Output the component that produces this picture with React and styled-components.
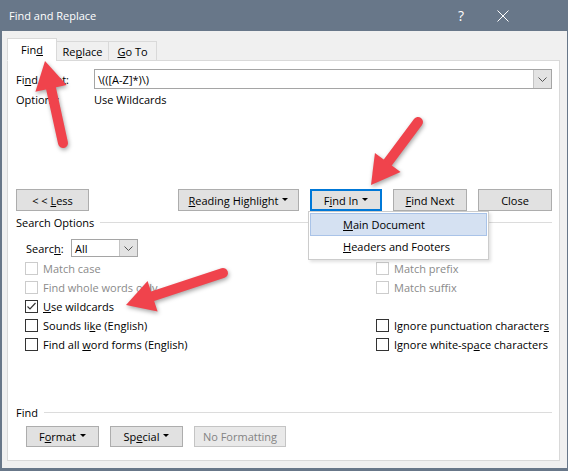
import React from 'react';
import styled, { createGlobalStyle } from 'styled-components';

const Global = createGlobalStyle`
  html, body { margin: 0; padding: 0; background: #fff; }
  body {
    font-family: "Open Sans", "Noto Sans", sans-serif;
    font-size: 11px;
    color: #000;
  }
`;

const Stage = styled.div`
  position: relative;
  width: 568px;
  height: 471px;
`;

const Window = styled.div`
  width: 100%;
  height: 100%;
  box-sizing: border-box;
  display: flex;
  flex-direction: column;
  background: #f0f0f0;
  border: solid #687789;
  border-width: 0 1px 3px 2px;
`;

const TitleBar = styled.div`
  height: 31px;
  flex: none;
  display: flex;
  align-items: center;
  background: #687789;
  color: #fff;
  font-size: 11px;
  padding: 0 44px 0 7px;
  margin-left: -2px;
  margin-right: -1px;
`;

const Title = styled.div`
  flex: 1;
  padding-left: 2px;
`;

const TitleButton = styled.div`
  width: 42px;
  height: 31px;
  display: flex;
  align-items: center;
  justify-content: center;
  font-size: 14px;
`;

const Body = styled.div`
  flex: 1;
  display: flex;
  flex-direction: column;
  padding: 7px 7px 7px 5px;
`;

const TabRow = styled.div`
  display: flex;
  align-items: flex-end;
  margin-bottom: -1px;
  position: relative;
  z-index: 1;
`;

const Tab = styled.div`
  box-sizing: border-box;
  width: ${p => p.$w}px;
  height: ${p => (p.$active ? 23 : 20)}px;
  margin-left: ${p => (p.$first ? 0 : -1)}px;
  display: flex;
  align-items: center;
  justify-content: center;
  padding-top: ${p => (p.$active ? 0 : 1)}px;
  background: ${p => (p.$active ? '#fff' : '#f0f0f0')};
  border: 1px solid #d9d9d9;
  border-bottom-color: ${p => (p.$active ? '#fff' : '#d9d9d9')};
`;

const Panel = styled.div`
  flex: 1;
  position: relative;
  display: flex;
  flex-direction: column;
  background: #fff;
  border: 1px solid #d9d9d9;
  padding: 8px 7px 13px 8px;
`;

const FieldRow = styled.div`
  display: flex;
  align-items: center;
  height: ${p => p.$h || 16}px;
  margin-top: ${p => p.$mt || 0}px;
  padding-left: ${p => p.$pl || 0}px;
`;

const FieldLabel = styled.div`
  width: ${p => p.$w || 78}px;
  flex: none;
`;

const Combo = styled.div`
  box-sizing: border-box;
  flex: ${p => (p.$w ? 'none' : 1)};
  width: ${p => (p.$w ? `${p.$w}px` : 'auto')};
  height: ${p => p.$h || 20}px;
  display: flex;
  align-items: center;
  border: 1px solid #a5a5a5;
  background: #fff;
`;

const ComboText = styled.div`
  flex: 1;
  padding-left: 3px;
`;

const ComboDrop = styled.div`
  width: 17px;
  align-self: stretch;
  display: flex;
  align-items: center;
  justify-content: center;
  background: #e3e3e3;
  border-left: 1px solid #c4c4c4;
`;

const ButtonRow = styled.div`
  display: flex;
  align-items: center;
  gap: ${p => p.$gap || 0}px;
  margin-top: ${p => p.$mt || 0}px;
  padding-left: ${p => p.$pl || 0}px;
`;

const ButtonGroup = styled.div`
  margin-left: auto;
  display: flex;
  gap: 11px;
`;

const Button = styled.div`
  box-sizing: border-box;
  width: ${p => p.$w}px;
  height: ${p => p.$h || 22}px;
  display: flex;
  align-items: center;
  justify-content: center;
  white-space: pre;
  background: ${p => (p.$disabled ? '#e9e9e9' : '#e1e1e1')};
  color: ${p => (p.$disabled ? '#838383' : '#000')};
  border: ${p => (p.$focus ? '2px solid #0078d7' : p.$disabled ? '1px solid #c4c4c4' : '1px solid #adadad')};
`;

const Caret = styled.span`
  display: inline-block;
  margin-left: 4px;
  border-left: 3px solid transparent;
  border-right: 3px solid transparent;
  border-top: 3px solid #000;
  transform: translateY(-1px);
`;

const MenuAnchor = styled.div`
  position: relative;
`;

const Menu = styled.div`
  position: absolute;
  top: 100%;
  left: -2px;
  width: 181px;
  box-sizing: border-box;
  background: #fff;
  border: 1px solid #cccccc;
  padding: 1px;
  box-shadow: 2px 2px 3px rgba(0, 0, 0, 0.12);
  z-index: 5;
`;

const MenuItem = styled.div`
  box-sizing: border-box;
  height: ${p => (p.$active ? 23 : 22)}px;
  display: flex;
  align-items: center;
  padding-left: 32px;
  padding-bottom: 1px;
  background: ${p => (p.$active ? '#d5e1f2' : 'transparent')};
  border: 1px solid ${p => (p.$active ? '#a9c3e8' : 'transparent')};
`;

const Section = styled.div`
  display: flex;
  align-items: center;
  height: 16px;
  margin-top: ${p => p.$mt || 0}px;
  &::after {
    content: '';
    flex: 1;
    height: 1px;
    background: #dcdcdc;
    margin-left: 6px;
    margin-top: 1px;
  }
`;

const CheckGrid = styled.div`
  display: grid;
  grid-template-columns: 351px 1fr;
  grid-auto-rows: 19px;
  padding-left: 9px;
  margin-top: 2px;
`;

const CheckItem = styled.div`
  display: flex;
  align-items: center;
  grid-column: ${p => p.$col};
  grid-row: ${p => p.$row};
  color: ${p => (p.$disabled ? '#8a8a8a' : '#000')};
`;

const Box = styled.span`
  box-sizing: border-box;
  width: 13px;
  height: 13px;
  flex: none;
  margin-right: 5px;
  display: flex;
  align-items: center;
  justify-content: center;
  background: #fff;
  border: 1px solid ${p => (p.$disabled ? '#cccccc' : '#333333')};
`;

const Spacer = styled.div`
  flex: 1;
`;

const Overlay = styled.svg`
  position: absolute;
  left: 0;
  top: 0;
  pointer-events: none;
  z-index: 10;
  filter: drop-shadow(1px 2px 2px rgba(0, 0, 0, 0.35));
`;

const Chevron = () => (
  <svg width="9" height="5" viewBox="0 0 9 5">
    <polyline points="0.5,0.5 4.5,4.5 8.5,0.5" fill="none" stroke="#555" strokeWidth="1" />
  </svg>
);

const Check = ({ label, col, row, checked, disabled }) => (
  <CheckItem $col={col} $row={row} $disabled={disabled}>
    <Box $disabled={disabled}>
      {checked && (
        <svg width="11" height="11" viewBox="0 0 11 11">
          <polyline points="1.5,5.5 4,8 9.5,2" fill="none" stroke="#333" strokeWidth="1.2" />
        </svg>
      )}
    </Box>
    <span>{label}</span>
  </CheckItem>
);

const RED = '#f0434c';

const Arrow = ({ from, to, head = 28, width = 32, shaft = 10 }) => {
  const dx = to[0] - from[0];
  const dy = to[1] - from[1];
  const len = Math.hypot(dx, dy);
  const ang = (Math.atan2(dy, dx) * 180) / Math.PI;
  return (
    <g transform={`translate(${from[0]} ${from[1]}) rotate(${ang})`}>
      <line x1="0" y1="0" x2={len - head + 4} y2="0" stroke={RED} strokeWidth={shaft} strokeLinecap="round" />
      <polygon points={`${len},0 ${len - head},${-width / 2} ${len - head},${width / 2}`} fill={RED} />
    </g>
  );
};

const App = () => (
  <Stage>
    <Global />
    <Window>
      <TitleBar>
        <Title>Find and Replace</Title>
        <TitleButton>?</TitleButton>
        <TitleButton>
          <svg width="12" height="12" viewBox="0 0 12 12">
            <path d="M0.5 0.5 L11.5 11.5 M11.5 0.5 L0.5 11.5" stroke="#fff" strokeWidth="1" />
          </svg>
        </TitleButton>
      </TitleBar>
      <Body>
        <TabRow>
          <Tab $w={50} $active $first>
            Fin<u>d</u>
          </Tab>
          <Tab $w={53}>
            Re<u>p</u>lace
          </Tab>
          <Tab $w={49}>
            <u>G</u>o To
          </Tab>
        </TabRow>
        <Panel>
          <FieldRow $h={20}>
            <FieldLabel>
              Fi<u>n</u>d what:
            </FieldLabel>
            <Combo>
              <ComboText>\(([A-Z]*)\)</ComboText>
              <ComboDrop>
                <Chevron />
              </ComboDrop>
            </Combo>
          </FieldRow>
          <FieldRow $mt={2}>
            <FieldLabel>Options:</FieldLabel>
            <div>Use Wildcards</div>
          </FieldRow>

          <ButtonRow $mt={82}>
            <Button $w={73}>
              {'< < '}
              <u>L</u>ess
            </Button>
            <ButtonGroup>
              <Button $w={121}>
                <u>R</u>eading Highlight
                <Caret />
              </Button>
              <MenuAnchor>
                <Button $w={72} $focus>
                  F<u>i</u>nd In
                  <Caret />
                </Button>
                <Menu>
                  <MenuItem $active>
                    <u>M</u>ain Document
                  </MenuItem>
                  <MenuItem>
                    <u>H</u>eaders and Footers
                  </MenuItem>
                </Menu>
              </MenuAnchor>
              <Button $w={74}>
                <u>F</u>ind Next
              </Button>
              <Button $w={74}>Close</Button>
            </ButtonGroup>
          </ButtonRow>

          <Section $mt={3}>Search Options</Section>

          <FieldRow $h={18} $mt={9} $pl={10}>
            <FieldLabel $w={45}>
              Searc<u>h</u>:
            </FieldLabel>
            <Combo $w={67} $h={18}>
              <ComboText>All</ComboText>
              <ComboDrop>
                <Chevron />
              </ComboDrop>
            </Combo>
          </FieldRow>

          <CheckGrid>
            <Check col={1} row={1} label="Match case" disabled />
            <Check col={1} row={2} label="Find whole words only" disabled />
            <Check col={1} row={3} checked label={<><u>U</u>se wildcards</>} />
            <Check col={1} row={4} label={<>Sounds li<u>k</u>e (English)</>} />
            <Check col={1} row={5} label={<>Find all <u>w</u>ord forms (English)</>} />
            <Check col={2} row={1} label="Match prefix" disabled />
            <Check col={2} row={2} label="Match suffix" disabled />
            <Check col={2} row={4} label={<>Ignore punctuation character<u>s</u></>} />
            <Check col={2} row={5} label={<>Ignore white-sp<u>a</u>ce characters</>} />
          </CheckGrid>

          <Spacer />

          <Section>Find</Section>
          <ButtonRow $mt={6} $gap={11} $pl={10}>
            <Button $w={73} $h={21}>
              F<u>o</u>rmat
              <Caret />
            </Button>
            <Button $w={73} $h={21}>
              Sp<u>e</u>cial
              <Caret />
            </Button>
            <Button $w={92} $h={21} $disabled>
              No Formatting
            </Button>
          </ButtonRow>
        </Panel>
      </Body>
    </Window>
    <Overlay width="568" height="471" viewBox="0 0 568 471">
      <Arrow from={[63, 143]} to={[45, 61]} />
      <Arrow from={[418, 122]} to={[371, 185]} />
      <Arrow from={[223, 273]} to={[126, 305]} />
    </Overlay>
  </Stage>
);

export default App;
